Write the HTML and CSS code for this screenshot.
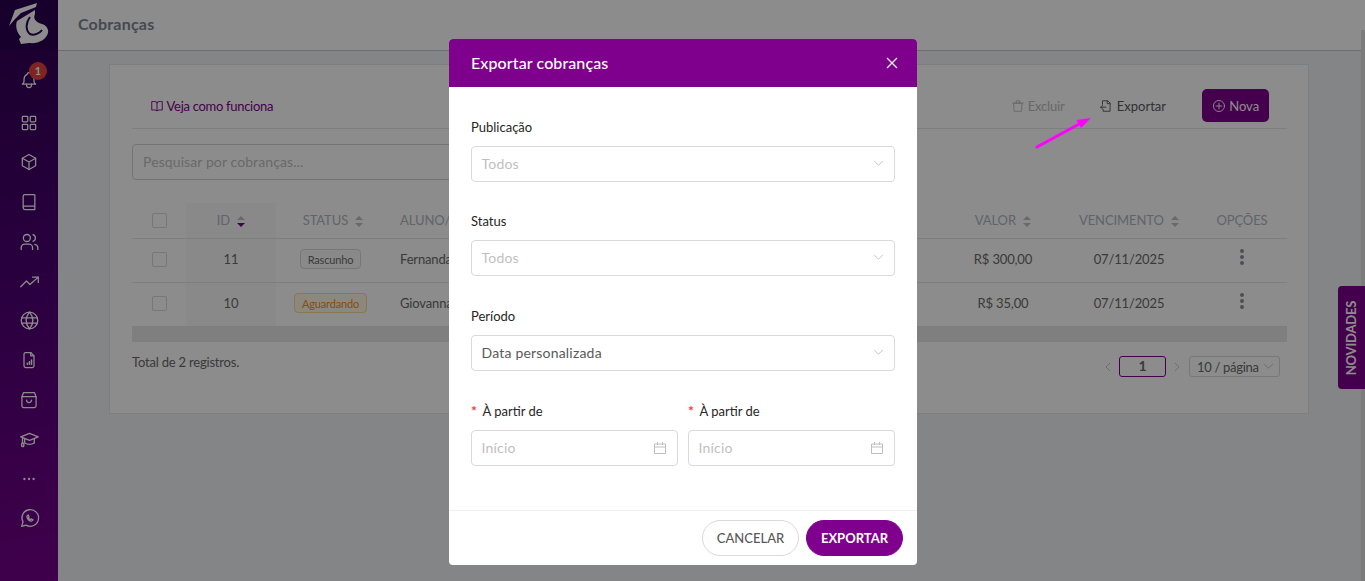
FILE: index.html
```html
<!DOCTYPE html>
<html lang="pt-BR">
  <head>
    <meta charset="UTF-8" />
    <title>Cobranças</title>
    <link rel="stylesheet" href="styles.css">
  </head>
  <body>
    <div class="app">
      <aside class="sidebar">
        <div class="logo">
          <svg width="58" height="50" viewBox="0 0 58 50">
            <path fill="#fff" d="M9 26 15 10 37 3 36 7 21 13 15 19Z" />
            <path fill="#fff" d="M17 21 35 10 35 14C33 18 35 22 42 24 46 25 49 29 48 33 46 40 38 44 29 43L21 44 19 39 21 37C17 33 15 26 17 21Z" />
            <path class="logo-slit" d="M30 17C26 22 25 30 30 34 34 36 40 33 42 30" />
          </svg>
        </div>
        <nav class="nav">
          <a class="nav-item nav-bell">
            <svg viewBox="0 0 24 24"><path d="M10 5a2 2 0 1 1 4 0 7 7 0 0 1 4 6v3a4 4 0 0 0 2 3H4a4 4 0 0 0 2-3v-3a7 7 0 0 1 4-6" /><path d="M9 17v1a3 3 0 0 0 6 0v-1" /></svg>
            <span class="badge">1</span>
          </a>
          <a class="nav-item"><svg viewBox="0 0 24 24"><rect x="4" y="4" width="6.5" height="6.5" rx="1" /><rect x="13.5" y="4" width="6.5" height="6.5" rx="1" /><rect x="4" y="13.5" width="6.5" height="6.5" rx="1" /><rect x="13.5" y="13.5" width="6.5" height="6.5" rx="1" /></svg></a>
          <a class="nav-item"><svg viewBox="0 0 24 24"><path d="M12 3l8 4.5v9L12 21l-8-4.5v-9z" /><path d="M12 12l8-4.5M12 12v9M12 12L4 7.5" /></svg></a>
          <a class="nav-item"><svg viewBox="0 0 24 24"><path d="M5 19V5a2 2 0 0 1 2-2h11a1 1 0 0 1 1 1v17H7a2 2 0 0 1-2-2a2 2 0 0 1 2-2h12" /></svg></a>
          <a class="nav-item"><svg class="wide" viewBox="0 0 24 24"><circle cx="9" cy="8" r="4" /><path d="M2.5 21v-2a4 4 0 0 1 4-4h5a4 4 0 0 1 4 4v2" /><path d="M16 4.2a4 4 0 0 1 0 7.6M18 15.2a4 4 0 0 1 3.5 3.8v2" /></svg></a>
          <a class="nav-item"><svg class="wide" viewBox="0 0 24 24"><path d="M2 18l6.5-6.5 4 4L22 7" /><path d="M15.5 7H22v6" /></svg></a>
          <a class="nav-item"><svg class="wide" viewBox="0 0 24 24"><circle cx="12" cy="12" r="9.5" /><path d="M3 9h18M3 15h18" /><path d="M12 2.5c-5 6-5 13 0 19M12 2.5c5 6 5 13 0 19" /></svg></a>
          <a class="nav-item"><svg viewBox="0 0 24 24"><path d="M14 3H8a2 2 0 0 0-2 2v14a2 2 0 0 0 2 2h8a2 2 0 0 0 2-2V7z" /><path d="M14 3v4h4" /><path class="thick" d="M10 17v-1M12.500 17v-3M15 17v-5" /></svg></a>
          <a class="nav-item"><svg viewBox="0 0 24 24"><path d="M5.500 3h13l2 5v11a2 2 0 0 1-2 2h-13a2 2 0 0 1-2-2V8z" /><path d="M3.500 8h17" /><path d="M9 12a3 3 0 0 0 6 0" /></svg></a>
          <a class="nav-item"><svg class="wide" viewBox="0 0 24 24"><path d="M22 9L12 5 2 9l10 4z" /><path d="M6.500 11v5c3 2 8 2 11 0v-5" /><path d="M4 10v6" /><rect x="3" y="16" width="2.500" height="4" rx="1" /></svg></a>
          <a class="nav-item"><svg viewBox="0 0 24 24"><path class="dots" d="M6.500 12h.01M12 12h.01M17.500 12h.01" /></svg></a>
          <a class="nav-item"><svg class="wide" viewBox="0 0 24 24"><path d="M3 21l1.600-5A9.500 9.500 0 1 1 8 19.500z" /><path d="M9 9.500c0 3 2.500 5.500 5.500 5.500l1.500-1.500-2-1-1 .7c-1-.4-1.800-1.200-2.200-2.200l.7-1-1-2z" /></svg></a>
        </nav>
      </aside>

      <div class="main">
        <header class="topbar">Cobranças</header>
        <div class="content">
          <section class="card">
            <div class="toolbar">
              <a class="help-link">
                <svg class="ico" viewBox="0 0 24 24"><path d="M12 6c-2-2-5-2-9-1.500V19c4-.5 7-.5 9 1.500 2-2 5-2 9-1.500V4.500C17 4 14 4 12 6zM12 6v14" /></svg>
                Veja como funciona
              </a>
              <div class="actions">
                <a class="action is-disabled">
                  <svg class="ico" viewBox="0 0 24 24"><path d="M5 7h14l-1 14H6zM3 7h18M9 7V3h6v4" /></svg>
                  Excluir
                </a>
                <a class="action">
                  <svg class="ico" viewBox="0 0 24 24"><path d="M6 9V3h9l4 4v14H7v-3" /><path d="M14 3v5h5" /><path d="M12 14H3M6 11l-3 3 3 3" /></svg>
                  Exportar
                </a>
                <button class="btn-new">
                  <svg class="ico" viewBox="0 0 24 24"><circle cx="12" cy="12" r="9.500" /><path d="M12 7v10M7 12h10" /></svg>
                  Nova
                </button>
              </div>
            </div>

            <div class="search">Pesquisar por cobranças...</div>

            <table class="charges">
              <colgroup>
                <col class="col-check" /><col class="col-id" /><col class="col-status" /><col /><col class="col-value" /><col class="col-due" /><col class="col-opts" />
              </colgroup>
              <thead>
                <tr>
                  <th><span class="check"></span></th>
                  <th class="sorted">ID <span class="sort sort-down"></span></th>
                  <th>STATUS <span class="sort"></span></th>
                  <th class="left">ALUNO/C</th>
                  <th>VALOR <span class="sort"></span></th>
                  <th>VENCIMENTO <span class="sort"></span></th>
                  <th>OPÇÕES</th>
                </tr>
              </thead>
              <tbody>
                <tr>
                  <td><span class="check"></span></td>
                  <td class="sorted">11</td>
                  <td><span class="tag">Rascunho</span></td>
                  <td class="left">Fernanda</td>
                  <td>R$ 300,00</td>
                  <td>07/11/2025</td>
                  <td><span class="kebab"><i></i><i></i><i></i></span></td>
                </tr>
                <tr>
                  <td><span class="check"></span></td>
                  <td class="sorted">10</td>
                  <td><span class="tag tag-wait">Aguardando</span></td>
                  <td class="left">Giovanna</td>
                  <td>R$ 35,00</td>
                  <td>07/11/2025</td>
                  <td><span class="kebab"><i></i><i></i><i></i></span></td>
                </tr>
              </tbody>
            </table>
            <div class="hscroll"></div>

            <div class="table-foot">
              <span class="total">Total de 2 registros.</span>
              <div class="pager">
                <svg class="chev" viewBox="0 0 10 10"><path d="M7 1L3 5l4 4" /></svg>
                <span class="page-box">1</span>
                <svg class="chev" viewBox="0 0 10 10"><path d="M3 1l4 4-4 4" /></svg>
                <span class="page-size"><span class="page-size-text">10 / página</span> <svg class="chev-down" viewBox="0 0 12 8"><path d="M1 1l5 5 5-5" /></svg></span>
              </div>
            </div>
          </section>
        </div>
      </div>
      <div class="page-scroll"></div>
    </div>

    <a class="news-tab"><span>NOVIDADES</span></a>

    <div class="overlay"></div>

    <svg class="arrow" width="60" height="36" viewBox="0 0 60 36">
      <path d="M2 31L46 7" />
      <path class="arrow-head" d="M56 2L41.500 4 46 12z" />
    </svg>

    <div class="modal-wrap">
      <div class="modal">
        <div class="modal-head">
          <span>Exportar cobranças</span>
          <svg class="close" viewBox="0 0 12 12"><path d="M1 1l10 10M11 1L1 11" /></svg>
        </div>
        <form class="modal-body">
          <label class="field-label">Publicação</label>
          <div class="select is-empty is-first">Todos <svg class="chev-down" viewBox="0 0 12 8"><path d="M1 1l5 5 5-5" /></svg></div>
          <label class="field-label">Status</label>
          <div class="select is-empty">Todos <svg class="chev-down" viewBox="0 0 12 8"><path d="M1 1l5 5 5-5" /></svg></div>
          <label class="field-label">Período</label>
          <div class="select">Data personalizada <svg class="chev-down" viewBox="0 0 12 8"><path d="M1 1l5 5 5-5" /></svg></div>
          <div class="date-row">
            <div>
              <label class="field-label"><span class="req">*</span>À partir de</label>
              <div class="select is-empty">Início <svg class="cal" viewBox="0 0 14 14"><path d="M1.500 3h11v9.500h-11zM1.500 6h11M4.500 1v3M9.500 1v3" /></svg></div>
            </div>
            <div>
              <label class="field-label"><span class="req">*</span>À partir de</label>
              <div class="select is-empty">Início <svg class="cal" viewBox="0 0 14 14"><path d="M1.500 3h11v9.500h-11zM1.500 6h11M4.500 1v3M9.500 1v3" /></svg></div>
            </div>
          </div>
        </form>
        <div class="modal-foot">
          <button class="btn-round">CANCELAR</button>
          <button class="btn-round btn-primary">EXPORTAR</button>
        </div>
      </div>
    </div>
  </body>
</html>
```

FILE: styles.css
```css
html,
body {
  margin: 0;
  height: 581px;
  overflow: hidden;
}

body {
  position: relative;
  font-family: Lato, "Open Sans", sans-serif;
  font-size: 13px;
  color: #6a6a6a;
  background: #f0f2f5;
}

.app {
  display: flex;
  height: 581px;
}

/* sidebar */
.sidebar {
  width: 58px;
  flex: none;
  background: linear-gradient(170deg, #2e0050 0%, #4e0075 50%, #75008a 100%);
}
.logo {
  height: 50px;
  background: #2c0050;
}
.logo svg {
  display: block;
}
.logo-slit {
  fill: none;
  stroke: #2c0050;
  stroke-width: 2;
}
.nav {
  display: flex;
  flex-direction: column;
  padding-top: 10px;
}
.nav-item {
  position: relative;
  height: 39.6px;
  display: flex;
  align-items: center;
  justify-content: center;
}
.nav-bell {
  margin-bottom: 3.5px;
}
.nav-item svg {
  width: 20px;
  height: 20px;
  fill: none;
  stroke: #fff;
  stroke-width: 1.5;
  stroke-linecap: round;
  stroke-linejoin: round;
}
.nav-item .wide {
  width: 21px;
  height: 21px;
}
.nav-item .thick {
  stroke-width: 1.8;
}
.nav-item .dots {
  stroke-width: 2.8;
}
.badge {
  position: absolute;
  top: 2px;
  left: 29px;
  width: 18px;
  height: 18px;
  border-radius: 50%;
  background: #e5443f;
  color: #fff;
  font-size: 11px;
  font-weight: 700;
  line-height: 17px;
  text-align: center;
}

/* main */
.main {
  flex: 1;
  min-width: 0;
}
.topbar {
  height: 51px;
  box-sizing: border-box;
  padding: 0 20px;
  border-bottom: 1px solid #c4c8cc;
  background: #fff;
  font-size: 16px;
  font-weight: 700;
  line-height: 48px;
  letter-spacing: 0.2px;
  color: #7c8794;
}
.content {
  padding: 13px 52px 0 51px;
}
.card {
  background: #fff;
  border: 1px solid #e4e6e8;
  height: 350px;
  box-sizing: border-box;
  padding: 22px 21px 0 22px;
}
.page-scroll {
  width: 4px;
  flex: none;
  background: linear-gradient(#fff 30px, #e2e2e2 30px);
}

.ico {
  width: 14px;
  height: 14px;
  fill: none;
  stroke: currentColor;
  stroke-width: 1.6;
  stroke-linejoin: round;
  stroke-linecap: round;
  vertical-align: -2px;
}

.toolbar {
  display: flex;
  justify-content: space-between;
  align-items: center;
  height: 37px;
  padding: 0 18px 4px 18px;
  border-bottom: 1px solid #e4e6e8;
}
.help-link {
  color: #7f008c;
  letter-spacing: -0.3px;
  white-space: nowrap;
}
.actions {
  display: flex;
  align-items: center;
}
.action {
  color: #5a5a5a;
  margin-right: 36px;
}
.action.is-disabled {
  color: #bdbdbd;
  letter-spacing: -0.2px;
  margin-right: 35px;
}
.btn-new {
  width: 67px;
  height: 33px;
  padding: 0;
  border: 0;
  border-radius: 5px;
  background: #7f008c;
  color: #fff;
  font: 13px Lato, sans-serif;
}

.search {
  width: 480px;
  height: 36px;
  margin-top: 15px;
  box-sizing: border-box;
  border: 1px solid #d4d4d4;
  border-radius: 4px;
  padding: 0 10px;
  font-size: 14px;
  letter-spacing: 0.1px;
  line-height: 34px;
  color: #bfbfbf;
}

/* table */
.charges {
  width: 100%;
  margin-top: 23px;
  border-collapse: collapse;
  table-layout: fixed;
}
.col-check { width: 54px; }
.col-id { width: 90px; }
.col-status { width: 114px; }
.col-value { width: 116px; }
.col-due { width: 136px; }
.col-opts { width: 90px; }
.charges th,
.charges td {
  padding: 0;
  text-align: center;
  border-bottom: 1px solid #e4e6e8;
  white-space: nowrap;
}
.charges th {
  height: 33px;
  padding-bottom: 2px;
  font-weight: 400;
  letter-spacing: -0.1px;
  color: #aeb6bf;
}
.charges td {
  height: 39px;
  padding-bottom: 4px;
  letter-spacing: -0.15px;
}
.charges .left {
  text-align: left;
  padding-left: 10px;
}
.charges .sorted {
  background: #fafafa;
}
.check {
  display: inline-block;
  width: 15px;
  height: 15px;
  box-sizing: border-box;
  vertical-align: middle;
  border: 1px solid #d9d9d9;
  border-radius: 2px;
  background: #fff;
}
.sort {
  display: inline-block;
  position: relative;
  width: 8px;
  height: 11px;
  margin-left: 4px;
  vertical-align: -2px;
}
.sort::before,
.sort::after {
  content: "";
  position: absolute;
  left: 0;
  border-left: 4px solid transparent;
  border-right: 4px solid transparent;
}
.sort::before {
  top: 0;
  border-bottom: 4px solid #bfbfbf;
}
.sort::after {
  bottom: 0;
  border-top: 4px solid #bfbfbf;
}
.sort-down::after {
  border-top-color: #7f008c;
}
.tag {
  display: inline-block;
  height: 20px;
  box-sizing: border-box;
  margin-right: 5px;
  padding: 0 7px;
  border: 1px solid #d9d9d9;
  border-radius: 4px;
  background: #fafafa;
  font-size: 11px;
  line-height: 19px;
}
.tag-wait {
  color: #fa8c16;
  background: #fff7e6;
  border-color: #ffd591;
}
.kebab {
  display: inline-flex;
  flex-direction: column;
  gap: 2px;
  vertical-align: middle;
  margin-bottom: 3px;
}
.kebab i {
  width: 4px;
  height: 4px;
  border-radius: 50%;
  background: #8c9199;
}
.hscroll {
  height: 15px;
  background: #e8e8e8;
}

.table-foot {
  display: flex;
  justify-content: space-between;
  align-items: flex-start;
  height: 21px;
  margin-top: 14px;
}
.total {
  line-height: 13px;
  letter-spacing: -0.2px;
}
.pager {
  display: flex;
  align-items: center;
  padding-right: 7px;
}
.chev {
  width: 10px;
  height: 10px;
  fill: none;
  stroke: #c9c9c9;
  stroke-width: 1;
}
.page-box {
  width: 47px;
  height: 21px;
  margin: 0 6px;
  box-sizing: border-box;
  border: 1px solid #7f008c;
  border-radius: 3px;
  text-align: center;
  font-size: 14px;
  font-weight: 700;
  line-height: 17px;
}
.page-size {
  display: flex;
  align-items: center;
  justify-content: space-between;
  width: 91px;
  height: 21px;
  margin-left: 7px;
  padding: 0 5px 0 7px;
  box-sizing: border-box;
  border: 1px solid #d9d9d9;
  border-radius: 3px;
  white-space: nowrap;
}
.page-size-text {
  letter-spacing: -0.3px;
}

.news-tab {
  position: absolute;
  top: 286px;
  right: 0;
  width: 27px;
  height: 103px;
  border-radius: 4px 0 0 4px;
  background: #7f008c;
  color: #fff;
  font-size: 13px;
  font-weight: 700;
  display: flex;
  align-items: center;
  justify-content: center;
}
.news-tab span {
  transform: rotate(-90deg);
  letter-spacing: -0.2px;
}

/* modal */
.overlay {
  position: absolute;
  inset: 0;
  background: rgba(0, 0, 0, 0.45);
}
.arrow {
  position: absolute;
  left: 1035px;
  top: 116px;
  fill: none;
  stroke: #ff00ff;
  stroke-width: 3;
  stroke-linecap: round;
}
.arrow-head {
  fill: #ff00ff;
  stroke: none;
}
.modal-wrap {
  position: absolute;
  inset: 0;
  padding: 39px 0 0 449px;
}
.modal {
  width: 468px;
  height: 526px;
  display: flex;
  flex-direction: column;
  background: #fff;
  border-radius: 4px;
  overflow: hidden;
}
.modal-head {
  display: flex;
  justify-content: space-between;
  align-items: center;
  height: 48px;
  flex: none;
  padding: 0 19px 1px 22px;
  box-sizing: border-box;
  background: #7f008c;
  color: #fff;
  font-size: 16px;
  font-weight: 500;
  letter-spacing: 0.1px;
}
.close {
  width: 12px;
  height: 12px;
  fill: none;
  stroke: #fff;
  stroke-width: 1.2;
}
.modal-body {
  flex: 1;
  padding: 29px 22px 0;
}
.field-label {
  display: block;
  height: 22px;
  margin-bottom: 8px;
  line-height: 22px;
  color: #262626;
}
.req {
  margin-right: 5.5px;
  font-size: 14px;
  font-weight: 700;
  color: #ff3040;
}
.select {
  display: flex;
  justify-content: space-between;
  align-items: center;
  height: 36px;
  margin-bottom: 29px;
  padding: 0 10px 1px 9.5px;
  box-sizing: border-box;
  border: 1px solid #d9d9d9;
  border-radius: 4px;
  color: #595959;
  font-size: 14px;
  letter-spacing: 0.2px;
}
.select.is-first {
  margin-bottom: 28px;
}
.select.is-empty {
  color: #bfbfbf;
}
.chev-down {
  width: 11px;
  height: 7px;
  fill: none;
  stroke: #bfbfbf;
  stroke-width: 1;
}
.cal {
  width: 14px;
  height: 14px;
  fill: none;
  stroke: #bfbfbf;
  stroke-width: 1;
}
.date-row {
  display: grid;
  grid-template-columns: 1fr 1fr;
  gap: 10px;
}
.modal-foot {
  display: flex;
  justify-content: flex-end;
  gap: 7px;
  height: 55px;
  flex: none;
  box-sizing: border-box;
  padding: 9px 14px 0;
  border-top: 1px solid #f0f0f0;
}
.btn-round {
  width: 97px;
  height: 36px;
  padding: 0;
  border: 1px solid #d9d9d9;
  border-radius: 18px;
  background: #fff;
  color: #595959;
  font: 500 13px Lato, sans-serif;
}
.btn-primary {
  border-color: #7f008c;
  background: #7f008c;
  color: #fff;
  font-weight: 700;
}
```
